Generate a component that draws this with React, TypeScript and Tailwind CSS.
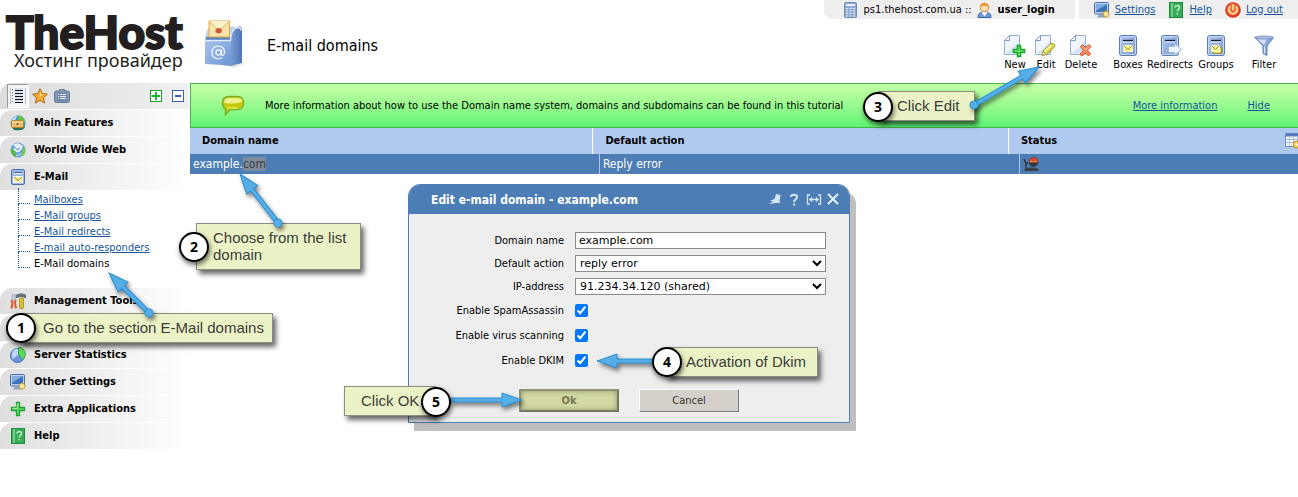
import type { ReactNode } from 'react'

type IconProps = { className?: string }

/* ---------- icons ---------- */

function ServerIcon() {
  return (
    <svg className="w-4 h-4 shrink-0" viewBox="0 0 16 16">
      <rect x="1.500" y="0.500" width="12" height="15" rx="1" fill="#8fabd3" stroke="#6d8cba" />
      <rect x="3" y="2" width="9" height="2" fill="#e8f0fb" />
      <path d="M3 6.500h2M6.500 6.500h2M10 6.500h2M3 9h2M6.500 9h2M10 9h2M3 11.500h2M6.500 11.500h2M10 11.500h2M3 14h2M6.500 14h2M10 14h2" stroke="#e8f0fb" strokeWidth="1.200" />
    </svg>
  )
}

function UserIcon() {
  return (
    <svg className="w-4 h-4 shrink-0" viewBox="0 0 16 16">
      <path d="M1 15.500C1 11.500 3 10 7.500 10s6.500 1.500 6.500 5.500z" fill="#6f9bdc" stroke="#3b66a8" />
      <path d="M4.500 10l3 4.500 3-4.500z" fill="#fff" />
      <circle cx="7.500" cy="5.500" r="4.200" fill="#fde0b4" stroke="#d08a35" />
      <path d="M3 6C2-1 13-1 12 6 10.500 3 5.500 3 3 6z" fill="#e8973a" />
    </svg>
  )
}

function MonitorIcon({ className = 'w-4 h-4' }: IconProps) {
  return (
    <svg className={`${className} shrink-0`} viewBox="0 0 16 16">
      <rect x="0.500" y="0.500" width="14" height="11.500" rx="1" fill="#bcd2ef" stroke="#4c6fa5" />
      <rect x="2" y="2" width="11" height="8" fill="#3a73bd" />
      <path d="M2 2h11L2 9z" fill="#7fabe2" />
      <path d="M5 12h5l1 3.500H3z" fill="#8ba6cd" />
      <path d="M12 8.500v7M8.500 12h7M9.500 9.500l5 5M14.500 9.500l-5 5" stroke="#c48a12" strokeWidth="1.600" />
      <circle cx="12" cy="12" r="2.500" fill="#f8dc78" />
      <circle cx="12" cy="12" r="1" fill="#fff" />
    </svg>
  )
}

function BookIcon({ className = 'w-4 h-4' }: IconProps) {
  return (
    <svg className={`${className} shrink-0`} viewBox="0 0 16 16">
      <rect x="1.500" y="0.500" width="13" height="15" fill="#35ad55" stroke="#1f8a3c" />
      <path d="M4 1v14" stroke="#b5e9c0" />
      <path d="M7 5.500C7 3 11.500 3 11.500 5.500c0 2-2.300 2-2.300 4" fill="none" stroke="#e9fbe9" strokeWidth="1.200" />
      <rect x="8.600" y="11" width="1.300" height="1.400" fill="#e9fbe9" />
    </svg>
  )
}

function PowerIcon() {
  return (
    <svg className="w-4 h-4 shrink-0" viewBox="0 0 16 16">
      <circle cx="8" cy="8" r="7.800" fill="#dd3a22" />
      <circle cx="8" cy="7.500" r="6" fill="#f0704c" />
      <path d="M5 4.500a4.200 4.200 0 1 0 6 0" fill="none" stroke="#ffe98f" strokeWidth="1.700" />
      <path d="M8 2.500v5.500" stroke="#ffe98f" strokeWidth="1.700" />
    </svg>
  )
}

function PageShape() {
  return (
    <>
      <path d="M6.500 1.500h10v19h-15v-14z" fill="#f1f6fe" stroke="#93add3" />
      <path d="M6.500 1.500v5h-5z" fill="#fff" stroke="#7f9cc8" />
      <path d="M3 19.500h13V8z" fill="#d3e2f6" />
    </>
  )
}

function NewIcon() {
  return (
    <svg className="w-6 h-6" viewBox="0 0 24 24">
      <PageShape />
      <path d="M14.500 11.500h3v4h4v3h-4v4h-3v-4h-4v-3h4z" fill="#6ff06a" stroke="#18a52c" strokeWidth="1.600" />
    </svg>
  )
}

function EditIcon() {
  return (
    <svg className="w-6 h-6" viewBox="0 0 24 24">
      <PageShape />
      <path d="M8 21.500l1-4.500 8-7.500c2-1 4.500 1.500 3.500 3.500l-8 7.500z" fill="#dcd443" stroke="#98912a" />
      <path d="M10.500 17.500l7-6.500" stroke="#f8f4a6" strokeWidth="1.800" />
      <path d="M8 21.500l1-4 3 3z" fill="#f7ecc8" stroke="#98912a" strokeWidth="0.700" />
    </svg>
  )
}

function DeleteIcon() {
  return (
    <svg className="w-6 h-6" viewBox="0 0 24 24">
      <PageShape />
      <path d="M11.500 12.500l2-2 3 3 3.500-3 2 2-3.500 3.500 3 4-2 2-3-3-3.500 3-2-2 3.500-3.500z" fill="#f68a60" stroke="#d0522a" />
      <path d="M13 12.500l3.500 3 3.500-3" fill="none" stroke="#ffc9ae" />
    </svg>
  )
}

function BoxShape() {
  return (
    <>
      <defs>
        <linearGradient id="cabinet" x1="0" y1="0" x2="1" y2="1">
          <stop offset="0" stopColor="#b4caf0" />
          <stop offset="1" stopColor="#7796cf" />
        </linearGradient>
      </defs>
      <rect x="3.500" y="1.500" width="17" height="20" rx="2" fill="url(#cabinet)" stroke="#5a7ab3" />
      <rect x="4.500" y="2.500" width="15" height="18" rx="1" fill="none" stroke="#c8d9f5" />
      <path d="M7 6.500h10" stroke="#10203c" strokeWidth="1.400" />
      <path d="M7 8h10" stroke="#eaf1fd" />
    </>
  )
}

function BoxesIcon() {
  return (
    <svg className="w-6 h-6" viewBox="0 0 24 24">
      <BoxShape />
      <path d="M7.500 11.500h9v6h-9z" fill="#f5f18a" stroke="#fffcd8" />
      <path d="M7.500 11.500l4.500 4 4.500-4" fill="none" stroke="#98933a" />
    </svg>
  )
}

function RedirectsIcon() {
  return (
    <svg className="w-6 h-6" viewBox="0 0 24 24">
      <BoxShape />
      <path d="M10.500 12.500h6v-3l7 6-7 6v-3h-6z" fill="#eef4fe" stroke="#9db5dd" />
    </svg>
  )
}

function GroupsIcon() {
  return (
    <svg className="w-6 h-6" viewBox="0 0 24 24">
      <BoxShape />
      <path d="M9.500 13.500h8v6h-8z" fill="#e3da58" stroke="#98913a" />
      <path d="M7.500 11.500h8v6h-8z" fill="#f5f18a" stroke="#fffcd8" />
      <path d="M7.500 11.500l4 4 4-4" fill="none" stroke="#98933a" />
    </svg>
  )
}

function FilterIcon() {
  return (
    <svg className="w-6 h-6" viewBox="0 0 24 24">
      <path d="M3 3.500h18.500L15 12v9.500l-4-2V12z" fill="#8ba8d8" stroke="#5f80b8" />
      <path d="M5 5h10l-3 6z" fill="#d3e0f6" />
      <path d="M12.500 12.500v7" stroke="#dbe7fa" />
      <ellipse cx="12" cy="3.500" rx="9.500" ry="1.500" fill="#a9c0e6" stroke="#5f80b8" strokeWidth="0.700" />
    </svg>
  )
}

function MailboxIcon() {
  return (
    <svg className="w-12 h-[50px] shrink-0" viewBox="0 0 48 50">
      <defs>
        <linearGradient id="boxFront" x1="0" y1="0" x2="1" y2="1">
          <stop offset="0" stopColor="#a9c4ee" />
          <stop offset="1" stopColor="#6c93d2" />
        </linearGradient>
        <linearGradient id="boxSide" x1="0" y1="0" x2="1" y2="0">
          <stop offset="0" stopColor="#7c9fd6" />
          <stop offset="1" stopColor="#4f76b4" />
        </linearGradient>
        <linearGradient id="boxShade" x1="0" y1="0" x2="1" y2="0">
          <stop offset="0" stopColor="#888888" />
          <stop offset="1" stopColor="#ffffff" stopOpacity="0" />
        </linearGradient>
      </defs>
      <path d="M18 45l20-6 9 4-16 4z" fill="url(#boxShade)" />
      <path d="M26 46V21c0-8 2-13 6-14l3-.5c2 0 3 1 3 3.500v33z" fill="url(#boxSide)" />
      <path d="M1 20C1.500 14 3 10 5 7h29c-4.500 1-7.500 6-7.500 13z" fill="#b9cff1" />
      <path d="M26.500 20c0-7 3-12 7-12.500 2.500 0 3.500 1 3.500 3" fill="none" stroke="#dce8fb" strokeWidth="1.500" />
      <path d="M1 20h26v25.500L1 44z" fill="url(#boxFront)" />
      <path d="M2 17h24v3H2z" fill="#5b80bd" />
      <path d="M1 20.500h26" stroke="#e6effd" strokeWidth="1.500" />
      <path d="M5 1h20.500v16H5z" fill="#fae3ab" stroke="#e0a94a" />
      <path d="M5 1l10 10L25.500 1" fill="#fdf0cd" stroke="#e0b566" />
      <path d="M12 9c2-2 6-1 6 1.500S15 14 13 13s-2-2-1-4z" fill="#c95a3a" />
      <circle cx="14.500" cy="32.500" r="2.600" fill="none" stroke="#f4f8ff" strokeWidth="1.300" />
      <path d="M17.300 29.500v4c0 3 3.200 2 3.200-1.500 0-8-12.500-8-12.500.5 0 6.500 6.500 7.500 10 5" fill="none" stroke="#f4f8ff" strokeWidth="1.300" />
    </svg>
  )
}

function ListIcon() {
  return (
    <svg className="w-4 h-[18px] block" viewBox="0 0 16 18">
      <path d="M0.500 1v16M15.500 1v16" stroke="#c2c2c2" />
      <path d="M5 3.500h8M5 6.500h8M5 9.500h8M5 12.500h8M5 15.500h8" stroke="#111" />
      <path d="M5 2h8M5 5h8M5 8h8M5 11h8M5 14h8" stroke="#b8cbe6" />
      <path d="M2 2.500h1M2 5.500h1M2 8.500h1M2 11.500h1M2 14.500h1" stroke="#4d72ad" />
    </svg>
  )
}

function StarIcon() {
  return (
    <svg className="w-4 h-4 block" viewBox="0 0 16 16">
      <path d="M8 .8l2.200 4.800 5.200.6-3.900 3.500 1.100 5.300L8 12.300 3.400 15l1.100-5.300L.6 6.200l5.200-.6z" fill="#f6ac33" stroke="#a8690f" />
      <path d="M8 2.500l1.500 4h3.500L8 8z" fill="#ffd98a" />
    </svg>
  )
}

function ClipboardIcon() {
  return (
    <svg className="w-4 h-4 block" viewBox="0 0 16 16">
      <path d="M5.500 3V1.500h5V3" fill="none" stroke="#5d7594" />
      <rect x="0.500" y="3" width="15" height="11.500" rx="2" fill="#8298b6" stroke="#5f7797" />
      <rect x="3" y="5" width="10" height="8" fill="#6d86a8" />
      <path d="M4 6.500h1M4 8.500h1M4 10.500h1M6 6.500h6M6 8.500h6M6 10.500h6" stroke="#f2f6fb" strokeWidth="1.200" />
    </svg>
  )
}

function GlobeCaseIcon() {
  return (
    <svg className="w-4 h-4 block" viewBox="0 0 16 16">
      <circle cx="8" cy="8" r="7.500" fill="#4b8ed0" />
      <path d="M8 .5c4 0 7 3 7.500 7l-5 0C8 6 7 4 8 .5z" fill="#63c048" />
      <path d="M2 4c2-3 4-3 5-3L5 6H1z" fill="#b5dcf6" />
      <path d="M4 15h8c2-1 3-3 3-4H2c0 1 1 3 2 4z" fill="#2a6f57" />
      <rect x="1.500" y="5.500" width="12" height="7" rx="1" fill="#e9bf70" stroke="#b3822c" />
      <path d="M2 7h11" stroke="#fbe6b0" />
      <rect x="6.500" y="8" width="2" height="2" fill="#8a6422" />
    </svg>
  )
}

function WebIcon() {
  return (
    <svg className="w-4 h-4 block" viewBox="0 0 16 16">
      <circle cx="8" cy="8" r="7.500" fill="#6ca2de" />
      <path d="M7 7L3 2.500 8 1l5 3z" fill="#e3f0fc" />
      <path d="M.8 7c1-1 3 0 4 2s2 3 1 6C3 14 .5 11 .8 7z" fill="#54bb45" />
      <path d="M14 4c2 3 2 7-1 10-1-1-2-1-3-1 2-2 3-5 4-9z" fill="#6bcb54" />
      <path d="M4 6.500c3 5 6 3 8-2.500" fill="none" stroke="#fff" strokeWidth="1.500" />
      <path d="M6 13c2 1 4 0 5-2" fill="none" stroke="#cfe3fa" />
    </svg>
  )
}

function MailIcon() {
  return (
    <svg className="w-4 h-4 block" viewBox="0 0 16 16">
      <rect x="1.500" y="0.500" width="13" height="15" rx="1.500" fill="#9bb8e6" stroke="#4c6fa9" />
      <path d="M4 3.500h8" stroke="#34548a" />
      <path d="M4 4.500h8" stroke="#fff" />
      <path d="M3.500 7.500h9v6h-9z" fill="#f4f09a" stroke="#fff" />
      <path d="M4 8l4 3.500L12 8" fill="none" stroke="#8c8735" />
    </svg>
  )
}

function ToolsIcon() {
  return (
    <svg className="w-4 h-4 block" viewBox="0 0 16 16">
      <path d="M2.500 1v6M5 1v6" stroke="#a5b3c6" strokeWidth="1.500" />
      <path d="M1.500 7l1 3-1 5.500M5.500 7l-.5 3 1 5.500" fill="none" stroke="#e4532c" strokeWidth="2" />
      <path d="M6 2c2-2 8-2 10 0v3h-2l-1-1H9L8 5H6z" fill="#64717f" />
      <rect x="9.500" y="5" width="4" height="10.500" rx="1" fill="#d9c22d" stroke="#a08c10" strokeWidth="0.800" />
    </svg>
  )
}

function PieIcon() {
  return (
    <svg className="w-4 h-4 block" viewBox="0 0 16 16">
      <circle cx="7.500" cy="8.500" r="7" fill="#6a95da" stroke="#4a72b6" />
      <path d="M3 4c3-3 5-2 5-2v6L3 12c-2-3-1-6 0-8z" fill="#c0d7f7" />
      <path d="M8.500 0v7.500l4.500 5c4-5 3-11-4.500-12.500z" fill="#5bdc58" stroke="#28963a" strokeWidth="0.800" />
    </svg>
  )
}

function PlusIcon() {
  return (
    <svg className="w-4 h-4 block" viewBox="0 0 16 16">
      <path d="M6.500 1.500h3v5h5v3h-5v5h-3v-5h-5v-3h5z" fill="#62dc66" stroke="#1fa037" strokeWidth="1.300" />
      <path d="M7.300 2.500v4.800H2.500" fill="none" stroke="#c6f7c2" strokeWidth="0.800" />
    </svg>
  )
}

function BubbleIcon() {
  return (
    <svg className="w-6 h-6 shrink-0" viewBox="0 0 24 24">
      <path d="M8 2.500h8c5 0 6.500 2 6.500 6.500s-1.500 6.500-6.500 6.500H9l-4.500 5v-5.500C2 14 1.500 12 1.500 9c0-4.500 2-6.500 6.500-6.500z" fill="#c7c90c" stroke="#78b02d" strokeWidth="1.500" />
      <path d="M8 4h8c4 0 5 1.500 5 3.500-4 2.500-13 2.500-18 1C3 5.500 5 4 8 4z" fill="#eff08c" />
      <path d="M6 14h11" stroke="#e9ec55" strokeWidth="1.500" />
    </svg>
  )
}

function SpyIcon() {
  return (
    <svg className="w-4 h-4 block" viewBox="0 0 16 16">
      <path d="M1 3l2 4.500V13M4.500 6L3 9" fill="none" stroke="#24282f" strokeWidth="1.200" />
      <path d="M1 15c1-3 3-3.500 8-3.500s6 1 7 3.500z" fill="#3c4048" />
      <circle cx="10.500" cy="6" r="4.800" fill="#343740" />
      <path d="M6.500 3.500C8 1 13 1 14.500 3.500v3h-8z" fill="#e1442a" />
      <path d="M7.500 5.500h2M11.500 5.500h2" stroke="#ffe14a" />
    </svg>
  )
}

function ColumnsIcon() {
  return (
    <svg className="w-4 h-4 max-w-none block" viewBox="0 0 16 16">
      <rect x="0.500" y="0.500" width="15" height="13" fill="#fff" stroke="#6c8cc4" />
      <path d="M1 2h14" stroke="#5479bb" strokeWidth="3" />
      <path d="M1 6.500h14M1 9.500h14M4.500 4v9M8.500 4v9M12.500 4v9" stroke="#a7bde0" />
      <circle cx="11.500" cy="11.500" r="3.500" fill="#f1cf5b" stroke="#b98e1c" />
      <circle cx="11.500" cy="11.500" r="1" fill="#fff" />
    </svg>
  )
}

/* ---------- data ---------- */

const tools = [
  { label: 'New', icon: <NewIcon />, width: 'w-[30px]' },
  { label: 'Edit', icon: <EditIcon />, width: 'w-8' },
  { label: 'Delete', icon: <DeleteIcon />, width: 'w-[38px]' },
  { label: 'Boxes', icon: <BoxesIcon />, width: 'w-8 ml-3' },
  { label: 'Redirects', icon: <RedirectsIcon />, width: 'w-[52px]' },
  { label: 'Groups', icon: <GroupsIcon />, width: 'w-10' },
  { label: 'Filter', icon: <FilterIcon />, width: 'w-8 ml-3' },
]

const mailLinks = ['Mailboxes', 'E-Mail groups', 'E-Mail redirects', 'E-mail auto-responders']

/* ---------- pieces ---------- */

function NavItem({ icon, children }: { icon?: ReactNode; children?: ReactNode }) {
  return (
    <button
      type="button"
      className="flex items-center gap-2 w-full h-[26px] mt-px pl-[10px] rounded-tl-xl bg-linear-to-r from-[#dfdfdf] to-white font-bold text-black text-left"
    >
      <span className="w-4 h-4">{icon}</span>
      {children}
    </button>
  )
}

function TopLink({ icon, children }: { icon: ReactNode; children: ReactNode }) {
  return (
    <div className="flex items-center gap-[5px]">
      {icon}
      <a href="#" className="text-[#15559a] underline">{children}</a>
    </div>
  )
}

function Arrow({ from, to, dot = false }: { from: [number, number]; to: [number, number]; dot?: boolean }) {
  const dx = to[0] - from[0]
  const dy = to[1] - from[1]
  const length = Math.hypot(dx, dy)
  const angle = (Math.atan2(dy, dx) * 180) / Math.PI
  return (
    <g transform={`translate(${from[0]} ${from[1]}) rotate(${angle})`} fill="#55aee6" stroke="#2a90d6">
      <path d={`M0 -2H${length - 20}V-7L${length} 0L${length - 20} 7V2H0z`} />
      {dot && <circle r="4" />}
    </g>
  )
}

function Note({ className, children }: { className: string; children: ReactNode }) {
  return (
    <div
      className={`absolute border border-[#8c8c84] bg-[#ebf3c6] text-[15px] leading-[17px] text-[#3c3c3c] font-['Liberation_Sans',Arial,sans-serif] shadow-[3px_4px_5px_rgba(0,0,0,0.6)] ${className}`}
    >
      {children}
    </div>
  )
}

function Step({ className, children }: { className: string; children: ReactNode }) {
  return (
    <span
      className={`absolute flex items-center justify-center w-[30px] h-[30px] rounded-full border-2 border-black bg-white text-sm font-bold text-black font-['Open_Sans',sans-serif] shadow-[1px_3px_5px_rgba(0,0,0,0.6)] ${className}`}
    >
      {children}
    </span>
  )
}

function EditDialog() {
  const label = 'text-right pr-[11px]'
  const field = "w-[251px] h-[17px] border border-[#8a8a8a] bg-white text-[11px] text-black font-['DejaVu_Sans',sans-serif]"
  return (
    <section className="absolute left-[408px] top-[184px] w-[442px] rounded-t-xl border border-[#4c7eb5] bg-[#eee] shadow-[6px_8px_0_#bfbfbf]">
      <header className="flex items-center justify-between h-[29px] pl-[22px] pr-[9px] rounded-t-[11px] bg-[#4c7eb5]">
        <h2 className="text-xs font-bold text-white">Edit e-mail domain - example.com</h2>
        <div className="flex items-center gap-2">
          <button type="button" aria-label="Pin">
            <svg className="w-[14px] h-[14px] block" viewBox="0 0 14 14">
              <path d="M8 1l4.500 1-1 6.500 1 1.500H7.500L1 11l4-2.500L2 7.500 6.500 6z" fill="#d7e4f4" />
            </svg>
          </button>
          <button type="button" aria-label="Help">
            <svg className="w-2 h-[14px] block" viewBox="0 0 8 14">
              <path d="M1 4C1 1 7 1 7 4 7 6.500 4 6.500 4 9" fill="none" stroke="#d7e4f4" strokeWidth="2" />
              <rect x="3" y="10.500" width="2" height="2" fill="#d7e4f4" />
            </svg>
          </button>
          <button type="button" aria-label="Resize">
            <svg className="w-4 h-[14px] block" viewBox="0 0 16 14">
              <path d="M4 2H1.500v9H4M12 2h2.500v9H12M4 6.500h8M6 4.500L4 6.500l2 2M10 4.500l2 2-2 2" fill="none" stroke="#d7e4f4" strokeWidth="1.300" />
            </svg>
          </button>
          <button type="button" aria-label="Close" className="-ml-1">
            <svg className="w-[14px] h-[14px] block" viewBox="0 0 14 14">
              <path d="M2 1l10 10M12 1L2 11" stroke="#e8f0fa" strokeWidth="2" />
            </svg>
          </button>
        </div>
      </header>
      <form className="pt-[15px] pb-[10px]">
        <div className="grid grid-cols-[166px_1fr] auto-rows-[23px] items-center">
          <label htmlFor="domain" className={label}>Domain name</label>
          <input id="domain" type="text" defaultValue="example.com" className={`${field} px-[3px]`} />
          <label htmlFor="action" className={label}>Default action</label>
          <select id="action" className={field}>
            <option>reply error</option>
          </select>
          <label htmlFor="ip" className={label}>IP-address</label>
          <select id="ip" className={field}>
            <option>91.234.34.120 (shared)</option>
          </select>
        </div>
        <div className="grid grid-cols-[166px_1fr] auto-rows-[25px] items-center">
          <label htmlFor="spam" className={label}>Enable SpamAssassin</label>
          <input id="spam" type="checkbox" defaultChecked className="w-[13px] h-[13px]" />
          <label htmlFor="virus" className={label}>Enable virus scanning</label>
          <input id="virus" type="checkbox" defaultChecked className="w-[13px] h-[13px]" />
          <label htmlFor="dkim" className={label}>Enable DKIM</label>
          <input id="dkim" type="checkbox" defaultChecked className="w-[13px] h-[13px]" />
        </div>
        <div className="flex gap-5 pl-[110px] pt-4">
          <button
            type="button"
            className="w-[100px] h-[23px] border-2 border-t-[#8f936f] border-l-[#8f936f] border-r-[#77775f] border-b-[#77775f] bg-[#d3d8a5] font-bold text-[#74784f] shadow-[inset_0_0_5px_#8b8f66]"
          >
            Ok
          </button>
          <button
            type="button"
            className="w-[100px] h-[23px] border border-t-white border-l-white border-r-[#7c7c7c] border-b-[#7c7c7c] bg-[#d5d0c9] text-[#333]"
          >
            Cancel
          </button>
        </div>
      </form>
    </section>
  )
}

export default function App() {
  return (
    <div className="relative min-h-screen overflow-hidden bg-white text-[11px] leading-4 text-black font-['DejaVu_Sans_Condensed','DejaVu_Sans',sans-serif]">
      <header className="flex h-[83px]">
        <div className="w-[204px] shrink-0 pt-[11px] pl-[6px] text-[#231f20]">
          <div className="text-[46px] leading-[42px] font-black font-['Lato',sans-serif] [-webkit-text-stroke:2px_#231f20]">TheHost</div>
          <div className="pl-2 text-[18px] leading-[14px] font-['Noto_Sans',sans-serif]">Хостинг провайдер</div>
        </div>
        <div className="flex pt-5">
          <MailboxIcon />
          <h1 className="pl-[15px] pt-4 text-base leading-5">E-mail domains</h1>
        </div>
        <div className="ml-auto">
          <div className="flex justify-end gap-1 h-5">
            <div className="flex items-center gap-[5px] h-[19px] pl-[19px] pr-5 rounded-bl-lg bg-[#eee]">
              <ServerIcon />
              <span>ps1.thehost.com.ua ::</span>
              <UserIcon />
              <b>user_login</b>
            </div>
            <div className="flex items-center gap-[13px] h-[19px] px-[15px] bg-[#eee]">
              <TopLink icon={<MonitorIcon />}>Settings</TopLink>
              <TopLink icon={<BookIcon />}>Help</TopLink>
              <TopLink icon={<PowerIcon />}>Log out</TopLink>
            </div>
          </div>
          <nav className="flex justify-end pt-[14px] pr-[18px]">
            {tools.map((tool) => (
              <button key={tool.label} type="button" className={`flex flex-col items-center ${tool.width}`}>
                {tool.icon}
                <span className="leading-[13px]">{tool.label}</span>
              </button>
            ))}
          </nav>
        </div>
      </header>

      <div className="flex">
        <aside className="w-[190px] shrink-0 pr-px">
          <div className="flex items-center h-[26px] pl-[7px] pr-[5px] rounded-tl-xl bg-linear-to-r from-[#dcdcdc] to-[#f0f0f0]">
            <button type="button" aria-label="List" className="p-[2px] border border-t-[#999] border-l-[#999] border-r-white border-b-white bg-[#f4f4f4]">
              <ListIcon />
            </button>
            <button type="button" aria-label="Favourites" className="ml-[3px]"><StarIcon /></button>
            <button type="button" aria-label="Notes" className="ml-[6px]"><ClipboardIcon /></button>
            <button type="button" aria-label="Expand all" className="ml-auto">
              <svg className="w-3 h-3 block" viewBox="0 0 12 12">
                <rect x="0.500" y="0.500" width="11" height="11" fill="#fff" stroke="#18a52c" />
                <path d="M2 6h8M6 2v8" stroke="#18b52c" strokeWidth="2" />
              </svg>
            </button>
            <button type="button" aria-label="Collapse all" className="ml-[10px]">
              <svg className="w-3 h-3 block" viewBox="0 0 12 12">
                <rect x="0.500" y="0.500" width="11" height="11" fill="#fff" stroke="#3c62a3" />
                <path d="M3 6h6" stroke="#3c62a3" strokeWidth="2" />
              </svg>
            </button>
          </div>
          <NavItem icon={<GlobeCaseIcon />}>Main Features</NavItem>
          <NavItem icon={<WebIcon />}>World Wide Web</NavItem>
          <NavItem icon={<MailIcon />}>E-Mail</NavItem>
          <ul className="h-[97px] pt-[2px] pl-[18px]">
            {mailLinks.map((link) => (
              <li key={link} className="flex h-4 gap-1">
                <span className="w-3 h-4 -mt-1 border-l border-b border-dotted border-[#15559a]" />
                <a href="#" className="text-[#15559a] underline">{link}</a>
              </li>
            ))}
            <li className="flex h-4 gap-1">
              <span className="w-3 h-4 -mt-1 border-l border-b border-dotted border-[#15559a]" />
              E-Mail domains
            </li>
          </ul>
          <NavItem icon={<ToolsIcon />}>Management Tools</NavItem>
          <NavItem />
          <NavItem icon={<PieIcon />}>Server Statistics</NavItem>
          <NavItem icon={<MonitorIcon />}>Other Settings</NavItem>
          <NavItem icon={<PlusIcon />}>Extra Applications</NavItem>
          <NavItem icon={<BookIcon />}>Help</NavItem>
        </aside>

        <main className="grow min-w-0">
          <div className="flex items-center h-[45px] pl-[30px] pr-7 border border-r-0 border-[#45b545] bg-linear-to-b from-[#c5ffa8] to-[#5cf573]">
            <BubbleIcon />
            <p className="pl-5">
              More information about how to use the Domain name system, domains and subdomains can be found in this tutorial
            </p>
            <a href="#" className="ml-auto text-[#15559a] underline">More information</a>
            <a href="#" className="ml-[30px] text-[#15559a] underline">Hide</a>
          </div>
          <table className="w-full table-fixed border-collapse text-left">
            <thead className="bg-[#b0c9ee]">
              <tr className="h-[26px]">
                <th className="w-4/11 p-0 pl-3">Domain name</th>
                <th className="w-3/8 p-0 pl-3 border-l border-white">Default action</th>
                <th className="p-0 pl-3 border-l border-white overflow-hidden">
                  <div className="flex items-center justify-between">
                    Status
                    <button type="button" aria-label="Columns" className="w-[13px] overflow-hidden"><ColumnsIcon /></button>
                  </div>
                </th>
              </tr>
            </thead>
            <tbody className="bg-[#4c7eb5] text-[12px] text-white">
              <tr className="h-5">
                <td className="p-0 pl-[3px]">
                  example.<span className="bg-[#7e8b9b] text-[#3c3c3c]">com</span>
                </td>
                <td className="p-0 pl-[6px]">
                  <div className="h-5 pl-[3px] pt-[2px] border-l border-[#b0c9ee]">Reply error</div>
                </td>
                <td className="p-0 pl-[11px]">
                  <div className="h-5 pl-[3px] pt-[2px] border-l border-[#b0c9ee]"><SpyIcon /></div>
                </td>
              </tr>
            </tbody>
          </table>
        </main>
      </div>

      <EditDialog />

      {/* walkthrough notes */}
      <Note className="left-5 top-[313px] w-[253px] h-[30px] pl-[22px] pt-[5px]">Go to the section E-Mail domains</Note>
      <Note className="left-[196px] top-[223px] w-[165px] h-[47px] pl-4 pt-[5px]">Choose from the list domain</Note>
      <Note className="left-[878px] top-[91px] w-[97px] h-[30px] pl-[18px] pt-[5px]">Click Edit</Note>
      <Note className="left-[666px] top-[347px] w-[152px] h-[30px] pl-[19px] pt-[5px]">Activation of Dkim</Note>
      <Note className="left-[344px] top-[386px] w-[92px] h-[30px] pl-4 pt-[5px]">Click OK</Note>

      <svg className="absolute left-0 top-0 w-[1298px] h-[497px] pointer-events-none drop-shadow-[2px_3px_2px_rgba(0,0,0,0.5)]" viewBox="0 0 1298 497">
        <Arrow from={[149, 313]} to={[109, 273]} dot />
        <Arrow from={[278, 223]} to={[240, 174]} dot />
        <Arrow from={[974, 105]} to={[1039, 67]} dot />
        <Arrow from={[654, 361]} to={[597, 361]} />
        <Arrow from={[450, 400]} to={[522, 400]} />
      </svg>

      <Step className="left-[6px] top-[313px]">1</Step>
      <Step className="left-[179px] top-[232px]">2</Step>
      <Step className="left-[863px] top-[92px]">3</Step>
      <Step className="left-[652px] top-[347px]">4</Step>
      <Step className="left-[421px] top-[387px]">5</Step>
    </div>
  )
}
